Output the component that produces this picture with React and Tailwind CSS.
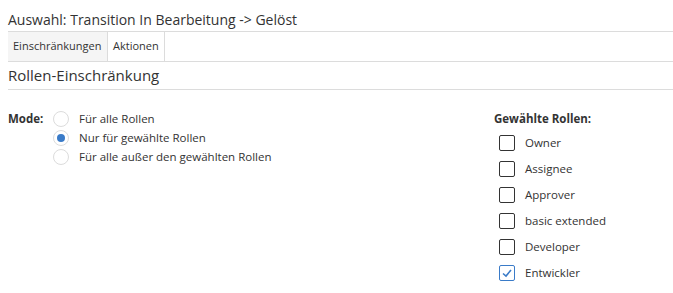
import React from "react";

const font = { fontFamily: '"Open Sans", "Noto Sans", sans-serif' };

function Radio({ checked, label }) {
  return (
    <div className="flex items-center h-[19px]">
      <span className="w-[16px] h-[16px] rounded-full border border-[#dcdcdc] bg-white flex items-center justify-center">
        {checked && <span className="w-[8px] h-[8px] rounded-full bg-[#3a7bc8]" />}
      </span>
      <span className="ml-[10px] text-[11.5px] text-[#333]">{label}</span>
    </div>
  );
}

function Check({ checked, label }) {
  return (
    <div className="flex items-center h-[26px]">
      <span className={`w-[16px] h-[16px] rounded-[2px] border ${checked ? "border-[#3a7bc8]" : "border-[#333]"} bg-white flex items-center justify-center`}>
        {checked && (
          <svg width="12" height="12" viewBox="0 0 12 12">
            <path d="M2 6.5 L5 9 L10 3" fill="none" stroke="#3a7bc8" strokeWidth="1.6" />
          </svg>
        )}
      </span>
      <span className="ml-[10px] text-[11.5px] text-[#333]">{label}</span>
    </div>
  );
}

export default function App() {
  return (
    <div className="w-[673px] h-[293px] bg-white overflow-hidden" style={font}>
      <div className="pl-[8px] pt-[10px] h-[31px] text-[14px] leading-[19px] text-[#333]">
        Auswahl: Transition In Bearbeitung -&gt; Gelöst
      </div>
      <div className="ml-[8px] flex border-t border-b border-[#dcdcdc] h-[31px]">
        <div className="pl-[5px] flex items-center bg-[#f5f5f5] border-r border-[#dcdcdc] text-[11px] text-[#333] w-[100px] whitespace-nowrap">
          Einschränkungen
        </div>
        <div className="pl-[5px] flex items-center border-r border-[#dcdcdc] text-[11px] text-[#333] w-[57px] whitespace-nowrap">
          Aktionen
        </div>
      </div>
      <div className="ml-[8px] border-b border-[#dcdcdc] h-[28px] pt-[3px] text-[15px] leading-[20px] text-[#333]">
        Rollen-Einschränkung
      </div>
      <div className="flex pl-[8px] pt-[19px]">
        <div className="flex w-[486px]">
          <div className="text-[11.5px] font-bold text-[#333] w-[45px] leading-[19px]">Mode:</div>
          <div className="flex flex-col">
            <Radio label="Für alle Rollen" />
            <Radio checked label="Nur für gewählte Rollen" />
            <Radio label="Für alle außer den gewählten Rollen" />
          </div>
        </div>
        <div className="flex flex-col">
          <div className="text-[11.5px] font-bold text-[#333] leading-[19px] h-[19px]">Gewählte Rollen:</div>
          <div className="pl-[5px] mt-[2px]">
            <Check label="Owner" />
            <Check label="Assignee" />
            <Check label="Approver" />
            <Check label="basic extended" />
            <Check label="Developer" />
            <Check checked label="Entwickler" />
          </div>
        </div>
      </div>
    </div>
  );
}
